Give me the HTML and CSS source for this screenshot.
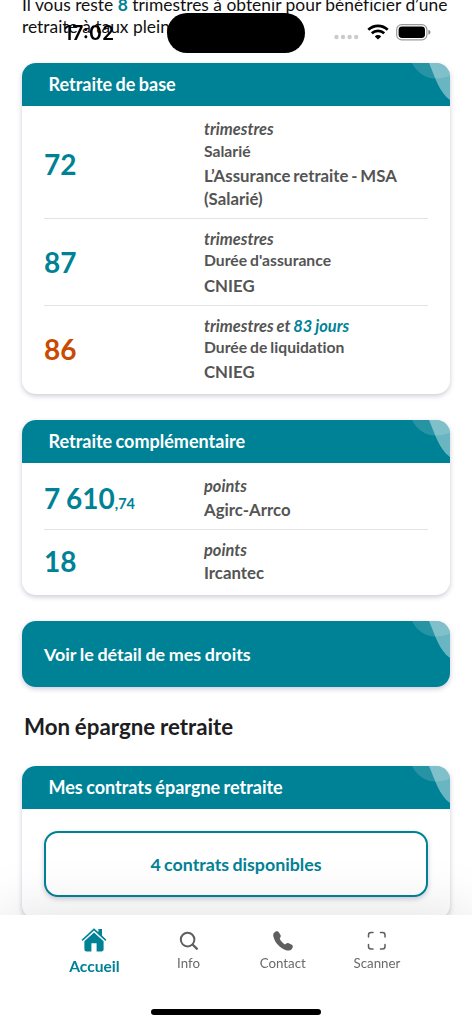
FILE: index.html
```html
<!DOCTYPE html>
<html lang="fr">
<head>
    <meta charset="UTF-8">
    <meta name="viewport" content="width=device-width, initial-scale=1.0">
    <title>Ma retraite</title>
    <link rel="stylesheet" href="styles.css">
</head>
<body>

    <!-- Barre de statut -->
    <div class="status-bar">
        <span class="time">17:02</span>
        <span class="island"></span>
        <span class="status-icons">
            <svg class="dots" width="25" height="6" viewBox="0 0 25 6" fill="#cbcbcb">
                <circle cx="2.5" cy="3" r="2.2"/><circle cx="9" cy="3" r="2.2"/><circle cx="15.6" cy="3" r="2.2"/><circle cx="22.2" cy="3" r="2.2"/>
            </svg>
            <svg class="wifi" width="22" height="16" viewBox="0 0 22 16" fill="none" stroke="#000" stroke-width="2.7">
                <path d="M1.3 5.7a14 14 0 0 1 19.4 0"/>
                <path d="M4.8 9.3a9 9 0 0 1 12.4 0"/>
                <path d="M11 15.6 7.8 12.4a4.6 4.6 0 0 1 6.4 0z" fill="#000" stroke="none"/>
            </svg>
            <svg class="battery" width="35" height="17" viewBox="0 0 35 17">
                <rect x=".7" y=".7" width="30.2" height="15.2" rx="5" fill="none" stroke="#999" stroke-width="1.2"/>
                <rect x="2.6" y="2.6" width="26.4" height="11.4" rx="3.4"/>
                <path d="M32.4 5.8v5c2.7-.7 2.7-4.3 0-5z" fill="#888"/>
            </svg>
        </span>
    </div>

    <!-- Contenu principal -->
    <main class="content">
        <p class="intro">Il vous reste <b>8</b> trimestres à obtenir pour bénéficier d’une retraite à taux plein.</p>

        <section class="card">
            <h3 class="card-header">Retraite de base
                <svg class="deco" width="39" height="38" viewBox="0 0 39 38" fill="#fff">
                    <path d="M1 0c5 10 14 15.500 23 15.500 6 0 11-1 15-3V0z" opacity=".15"/>
                    <path d="M18 0c6 14 10 29 21 37V0z" opacity=".41"/>
                </svg>
            </h3>
            <div class="rows">
                <div class="row">
                    <div class="value">72</div>
                    <div class="detail">
                        <em>trimestres</em>
                        <p class="type">Salarié</p>
                        <p>L’Assurance retraite - MSA (Salarié)</p>
                    </div>
                </div>
                <div class="row">
                    <div class="value">87</div>
                    <div class="detail">
                        <em>trimestres</em>
                        <p class="type">Durée d'assurance</p>
                        <p>CNIEG</p>
                    </div>
                </div>
                <div class="row">
                    <div class="value orange">86</div>
                    <div class="detail">
                        <em>trimestres et <span class="days">83 jours</span></em>
                        <p class="type">Durée de liquidation</p>
                        <p>CNIEG</p>
                    </div>
                </div>
            </div>
        </section>

        <section class="card">
            <h3 class="card-header">Retraite complémentaire
                <svg class="deco" width="39" height="38" viewBox="0 0 39 38" fill="#fff">
                    <path d="M1 0c5 10 14 15.500 23 15.500 6 0 11-1 15-3V0z" opacity=".15"/>
                    <path d="M18 0c6 14 10 29 21 37V0z" opacity=".41"/>
                </svg>
            </h3>
            <div class="rows">
                <div class="row">
                    <div class="value">7 610<small>,74</small></div>
                    <div class="detail">
                        <em>points</em>
                        <p>Agirc-Arrco</p>
                    </div>
                </div>
                <div class="row">
                    <div class="value">18</div>
                    <div class="detail">
                        <em>points</em>
                        <p>Ircantec</p>
                    </div>
                </div>
            </div>
        </section>

        <a class="card link-card" href="#">Voir le détail de mes droits
            <svg class="deco" width="39" height="38" viewBox="0 0 39 38" fill="#fff">
                <path d="M1 0c5 10 14 15.500 23 15.500 6 0 11-1 15-3V0z" opacity=".15"/>
                <path d="M18 0c6 14 10 29 21 37V0z" opacity=".41"/>
            </svg>
        </a>

        <h2 class="title">Mon épargne retraite</h2>

        <section class="card">
            <h3 class="card-header">Mes contrats épargne retraite
                <svg class="deco" width="39" height="38" viewBox="0 0 39 38" fill="#fff">
                    <path d="M1 0c5 10 14 15.500 23 15.500 6 0 11-1 15-3V0z" opacity=".15"/>
                    <path d="M18 0c6 14 10 29 21 37V0z" opacity=".41"/>
                </svg>
            </h3>
            <div class="card-body">
                <button class="contracts-btn">4 contrats disponibles</button>
            </div>
        </section>
    </main>

    <!-- Navigation -->
    <nav class="tab-bar">
        <div class="tabs">
            <a class="tab active" href="#">
                <svg width="26" height="26" viewBox="0 0 26 26" fill="#008296">
                    <path d="M13 1.200 17.400 5.200V2h3.600v6.600l4.400 4.200-1 1.200L13 3.400 1.600 14l-1-1.200z"/>
                    <path d="M13 5.400 22.600 14.200v8.400q0 1.800-1.800 1.800h-5.200v-8.200h-5.200v8.200H5.200q-1.800 0-1.800-1.800V14.200z"/>
                </svg>
                <span>Accueil</span>
            </a>
            <a class="tab" href="#">
                <svg width="20" height="20" viewBox="0 0 20 20" fill="none" stroke="#5f5f5f" stroke-width="2">
                    <circle cx="8.600" cy="8.600" r="6.800"/>
                    <path d="M13.500 13.500l5 4.800" stroke-width="2.400"/>
                </svg>
                <span>Info</span>
            </a>
            <a class="tab" href="#">
                <svg width="20" height="20" viewBox="0 0 20 20" fill="#5f5f5f">
                    <path d="M1.600 1.200C3.200-.2 5 .2 6 1.600L7.600 4.200C8.200 5.400 7.200 6.600 6.700 7.600C7.600 10 9.600 12 12 13.400C13 12.800 14 11.600 15.200 12L18.800 13.800C20.400 14.800 20 16.600 18.800 18C17.400 19.600 15.200 20 13 19.200C6.800 17 1.800 11.800.4 5.600C0 3.800.2 2.400 1.600 1.200z"/>
                </svg>
                <span>Contact</span>
            </a>
            <a class="tab" href="#">
                <svg width="20" height="20" viewBox="0 0 20 20" fill="none" stroke="#5f5f5f" stroke-width="1.500" stroke-linecap="round">
                    <path d="M1.500 6V4q0-2.500 2.500-2.500h2M13.500 1.500h2q2.500 0 2.500 2.500v2M18 13.500v2q0 2.500-2.500 2.500h-2M6 18H4q-2.500 0-2.500-2.500v-2"/>
                </svg>
                <span>Scanner</span>
            </a>
        </div>
        <div class="home-indicator"></div>
    </nav>

</body>
</html>
```
FILE: styles.css
```css
* {
    margin: 0;
    padding: 0;
    box-sizing: border-box;
}

body {
    font-family: Lato, sans-serif;
    font-variant-ligatures: none;
    height: 1024px;
    overflow: hidden;
    background: #fff;
    color: #1d1d22;
}

a {
    text-decoration: none;
}

/* Barre de statut */
.status-bar {
    position: fixed;
    top: 0;
    left: 0;
    width: 472px;
    height: 64px;
    z-index: 10;
    color: #000;
}

.time {
    position: absolute;
    left: 64px;
    top: 22px;
    font: 600 19.5px/22px Inter, sans-serif;
}

.island {
    position: absolute;
    left: 167px;
    top: 13px;
    width: 138px;
    height: 40px;
    border-radius: 20px;
    background: #000;
}

.status-icons {
    position: absolute;
    left: 334px;
    top: 24px;
    display: flex;
}

.dots {
    margin-top: 10px;
}

.wifi {
    margin-left: 8px;
}

.battery {
    margin: 0 0 0 7px;
}

/* Contenu principal */
.content {
    padding: 0 22px;
}

.intro {
    height: 64px;
    margin-top: -6px;
    margin-right: -8px;
    font-size: 17.4px;
    line-height: 22px;
    color: #111;
}

.intro b {
    color: #008296;
}

.card {
    position: relative;
    display: block;
    width: 428px;
    margin-bottom: 26px;
    border-radius: 14px;
    background: #fff;
    box-shadow: 0 2px 5px rgba(50, 50, 100, 0.25);
    overflow: hidden;
}

.intro + .card {
    margin-top: 5.4px;
}

.card-header {
    height: 43px;
    padding-left: 26.5px;
    background: #008296;
    color: #fff;
    font-size: 18px;
    font-weight: 700;
    line-height: 42px;
    word-spacing: -1px;
}

.deco {
    position: absolute;
    top: 0;
    right: 0;
}

.rows {
    padding: 3px 22px;
}

.row {
    display: flex;
    align-items: center;
    padding: 8px 0;
}

.row + .row {
    border-top: 1px solid #e3e3e5;
}

.value {
    width: 160px;
    color: #008296;
    font-size: 28px;
    font-weight: 700;
    word-spacing: -1px;
}

.value small {
    font-size: 14.5px;
}

.value.orange {
    color: #c94a00;
}

.detail {
    flex: 1;
    color: #545454;
    font-size: 16.8px;
    font-weight: 700;
    line-height: 23.2px;
    word-spacing: -1.3px;
}

.detail em {
    display: block;
    font-size: 16.4px;
    word-spacing: -0.7px;
}

.type {
    position: relative;
    top: -1px;
    font-size: 15.7px;
    word-spacing: -0.8px;
}

.days {
    color: #008296;
}

.link-card {
    height: 66px;
    padding-left: 22px;
    background: #008296;
    color: #fff;
    font-size: 17.9px;
    font-weight: 700;
    line-height: 66px;
    word-spacing: -0.7px;
}

.title {
    margin: 0 2px 26px;
    font-size: 22.3px;
    font-weight: 700;
    line-height: 27px;
    word-spacing: -0.7px;
}

.card-body {
    height: 110px;
    padding: 22px;
}

.contracts-btn {
    display: block;
    width: 384px;
    height: 66px;
    border: 2px solid #008296;
    border-radius: 14px;
    background: #fff;
    box-shadow: 0 2px 5px rgba(50, 50, 100, 0.25);
    color: #008296;
    font: 700 17.8px Lato, sans-serif;
    font-variant-ligatures: none;
    word-spacing: -1px;
}

/* Navigation */
.tab-bar {
    position: fixed;
    left: 0;
    bottom: 0;
    width: 472px;
    height: 109px;
    background: #fff;
    box-shadow: 0 0 60px rgba(0, 0, 0, 0.13);
}

.tabs {
    display: grid;
    grid-template-columns: repeat(4, 94.2px);
    padding: 12px 0 0 47.3px;
}

.tab {
    display: flex;
    flex-direction: column;
    align-items: center;
    height: 82px;
    padding-top: 4px;
    gap: 4.4px;
    color: #6a6a6a;
    font-size: 13.3px;
    line-height: 17px;
}

.tab.active {
    padding-top: 0;
    gap: 3px;
    color: #008296;
    font-size: 15.6px;
    font-weight: 700;
    line-height: 20px;
}

.home-indicator {
    width: 170px;
    height: 6px;
    margin: 0 auto;
    border-radius: 3px;
    background: #000;
}
```
